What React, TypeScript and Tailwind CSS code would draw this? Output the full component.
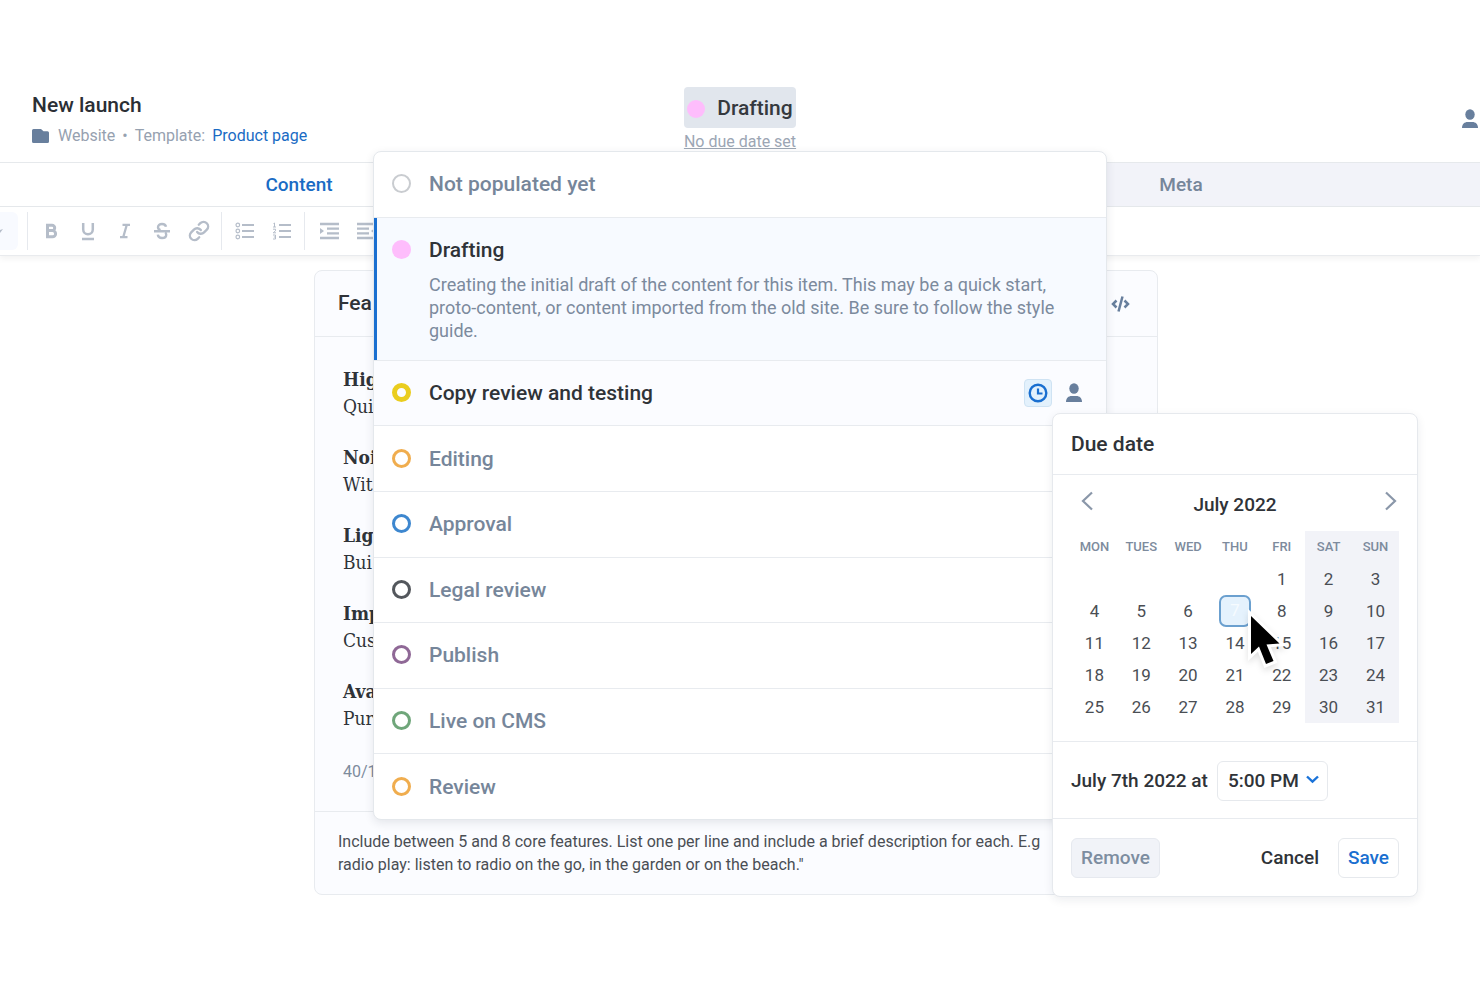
import clsx from 'clsx';

interface Status {
  name: string;
  ring: string;
  description?: string;
  current?: boolean;
  hovered?: boolean;
}

const statuses: Status[] = [
  { name: 'Not populated yet', ring: 'border-2 border-[#c9ccd0]' },
  {
    name: 'Drafting',
    ring: 'bg-[#febdfc]',
    current: true,
    description:
      'Creating the initial draft of the content for this item. This may be a quick start, proto-content, or content imported from the old site. Be sure to follow the style guide.',
  },
  { name: 'Copy review and testing', ring: 'border-[5px] border-[#eacd1f]', hovered: true },
  { name: 'Editing', ring: 'border-[3px] border-[#f0ad4e]' },
  { name: 'Approval', ring: 'border-[3px] border-[#3d87cf]' },
  { name: 'Legal review', ring: 'border-[3px] border-[#53575c]' },
  { name: 'Publish', ring: 'border-[3px] border-[#8f6896]' },
  { name: 'Live on CMS', ring: 'border-[3px] border-[#6fa67a]' },
  { name: 'Review', ring: 'border-[3px] border-[#f0ad4e]' },
];

const features = [
  { title: 'Hig', text: 'Qui' },
  { title: 'Noi', text: 'Wit' },
  { title: 'Lig', text: 'Bui' },
  { title: 'Imp', text: 'Cus' },
  { title: 'Ava', text: 'Pur' },
];

const weekdays = ['MON', 'TUES', 'WED', 'THU', 'FRI', 'SAT', 'SUN'];

const weeks: (number | null)[][] = [
  [null, null, null, null, 1, 2, 3],
  [4, 5, 6, 7, 8, 9, 10],
  [11, 12, 13, 14, 15, 16, 17],
  [18, 19, 20, 21, 22, 23, 24],
  [25, 26, 27, 28, 29, 30, 31],
];

function PersonIcon() {
  return (
    <svg width="16" height="20" viewBox="0 0 16 20" fill="#687f9d" aria-hidden="true">
      <ellipse cx="8" cy="5.5" rx="4.7" ry="5.3" />
      <path d="M0 19c0-4 2.6-6 5.500-6h5C13.400 13 16 15 16 19z" />
    </svg>
  );
}

function Cursor() {
  return (
    <svg
      className="pointer-events-none absolute left-[28px] top-[14px] z-10 drop-shadow-md"
      width="42"
      height="62"
      viewBox="0 0 42 62"
      aria-hidden="true"
    >
      <path
        d="M4 7v38l8-7.500L19 55l7.500-3L19.500 35.500 32.500 34.500z"
        fill="#000"
        stroke="#fff"
        strokeWidth="6"
        paintOrder="stroke"
      />
    </svg>
  );
}

function Divider() {
  return <span className="h-[38px] w-px bg-[#e6e9ee]" />;
}

function Toolbar() {
  const tool = 'flex h-8 w-[37px] items-center justify-center text-[#b5bdc9]';
  return (
    <div
      role="toolbar"
      aria-label="Formatting"
      className="relative flex h-[49px] items-center border-b border-[#e9ebee] bg-white shadow-[0_3px_6px_rgba(0,0,0,0.05)]"
    >
      <button aria-label="Text style" className="mr-[9px] flex h-[38px] w-[18px] items-center rounded-r-md bg-[#f8faff]">
        <svg width="3" height="4" viewBox="0 0 3 4">
          <path d="M0 4V1l3-1z" fill="#b5bdc9" />
        </svg>
      </button>
      <Divider />
      <div className="flex px-1">
        <button aria-label="Bold" className={tool}>
          <svg width="20" height="20" viewBox="0 0 20 20" fill="none" stroke="currentColor" strokeWidth="3">
            <path d="M6.500 4.200h4.500a2.700 2.700 0 0 1 0 5.400H6.500zM6.500 9.600h5a3.100 3.100 0 0 1 0 6.200H6.500z" />
          </svg>
        </button>
        <button aria-label="Underline" className={tool}>
          <svg width="20" height="20" viewBox="0 0 20 20" fill="none" stroke="currentColor" strokeWidth="2.500">
            <path d="M5.200 2v6.500a4.800 4.800 0 0 0 9.600 0V2M4 18h12" />
          </svg>
        </button>
        <button aria-label="Italic" className={tool}>
          <svg width="20" height="20" viewBox="0 0 20 20" fill="none" stroke="currentColor" strokeWidth="2.300">
            <path d="M7.500 3.800h7.500M5 16.200h7.500M11.800 3.800L8.200 16.200" />
          </svg>
        </button>
        <button aria-label="Strikethrough" className={tool}>
          <svg width="20" height="20" viewBox="0 0 20 20" fill="none" stroke="currentColor" strokeWidth="2.400">
            <path d="M14 5.800C13.700 3.800 12.200 3 10 3 7.500 3 6 4.200 6 6.200c0 1.400.8 2.400 2.500 3M5.800 13.600C6.100 15.900 7.700 17 10 17c2.600 0 4.200-1.200 4.200-3.300 0-.9-.3-1.600-.9-2.200M2 10.200h16" />
          </svg>
        </button>
        <button aria-label="Link" className={tool}>
          <svg width="22" height="22" viewBox="0 0 24 24" fill="none" stroke="currentColor" strokeWidth="2.600" strokeLinecap="round">
            <path d="M10 13a5 5 0 0 0 7.540.54l3-3a5 5 0 0 0-7.070-7.070l-1.720 1.710" />
            <path d="M14 11a5 5 0 0 0-7.540-.54l-3 3a5 5 0 0 0 7.070 7.070l1.710-1.710" />
          </svg>
        </button>
      </div>
      <Divider />
      <div className="flex px-1">
        <button aria-label="Bulleted list" className={tool}>
          <svg width="20" height="18" viewBox="0 0 20 18" fill="none" stroke="currentColor">
            <path d="M7 3h12M7 9h12M7 15h12" strokeWidth="2.200" />
            <circle cx="2.800" cy="3" r="1.800" strokeWidth="1.200" />
            <circle cx="2.800" cy="9" r="1.800" strokeWidth="1.200" />
            <circle cx="2.800" cy="15" r="1.800" strokeWidth="1.200" />
          </svg>
        </button>
        <button aria-label="Numbered list" className={tool}>
          <svg width="20" height="18" viewBox="0 0 20 18" fill="none" stroke="currentColor">
            <path d="M7 3h12M7 9h12M7 15h12" strokeWidth="2.200" />
            <path d="M1.500 1.500l1-.5v4M1 5h3M1 7.200h2.500v1.600L1.200 10.800H4M1 13h2.500v4H1M1.800 15h1.700" />
          </svg>
        </button>
      </div>
      <Divider />
      <div className="flex px-[5px]">
        <button aria-label="Indent" className={tool}>
          <svg width="20" height="18" viewBox="0 0 20 18" stroke="currentColor" strokeWidth="2.300">
            <path d="M1 2h19M8 6.700h12M8 11.300h12M1 16h19" />
            <path d="M1 6l4 3-4 3z" fill="currentColor" stroke="none" />
          </svg>
        </button>
        <button aria-label="Outdent" className={tool}>
          <svg width="20" height="18" viewBox="0 0 20 18" stroke="currentColor" strokeWidth="2.300">
            <path d="M1 2h19M1 6.700h12M1 11.300h12M1 16h19" />
            <path d="M19 6l-4 3 4 3z" fill="currentColor" stroke="none" />
          </svg>
        </button>
      </div>
    </div>
  );
}

function Calendar() {
  return (
    <div className="border-b border-[#e8ebef] px-[18px] pb-[18px] pt-1">
      <div className="grid h-[52px] grid-cols-[32px_1fr_32px] items-center">
        <button aria-label="Previous month" className="justify-self-center pb-2">
          <svg width="16" height="20" viewBox="0 0 16 20" fill="none" stroke="#8a97a9" strokeWidth="2.200">
            <path d="M13 1.500L4 10l9 8.500" />
          </svg>
        </button>
        <span className="text-center text-[19px] font-medium">July 2022</span>
        <button aria-label="Next month" className="justify-self-end pb-2">
          <svg width="16" height="20" viewBox="0 0 16 20" fill="none" stroke="#8a97a9" strokeWidth="2.200">
            <path d="M3 1.500l9 8.500-9 8.500" />
          </svg>
        </button>
      </div>
      <table className="w-full table-fixed text-center">
        <thead>
          <tr>
            {weekdays.map((day, i) => (
              <th
                key={day}
                scope="col"
                className={clsx('h-8 p-0 text-[13px] font-medium text-[#7d8b9d]', i > 4 && 'bg-[#f2f3f8]')}
              >
                {day}
              </th>
            ))}
          </tr>
        </thead>
        <tbody>
          {weeks.map((week, w) => (
            <tr key={w}>
              {week.map((day, i) => (
                <td key={i} className={clsx('h-8 p-0 text-[17px] text-[#4a4e54]', i > 4 && 'bg-[#f2f3f8]')}>
                  {day === 7 ? (
                    <div className="relative mx-auto h-8 w-8">
                      <button
                        aria-pressed="true"
                        className="h-8 w-8 rounded-[7px] border-2 border-[#6ba0cf] bg-[#e5f2fd] text-[#f6fbff]"
                      >
                        7
                      </button>
                      <Cursor />
                    </div>
                  ) : (
                    day && <button className="h-8 w-8 pt-px">{day}</button>
                  )}
                </td>
              ))}
            </tr>
          ))}
        </tbody>
      </table>
    </div>
  );
}

function DueDatePopover() {
  return (
    <div
      role="dialog"
      aria-label="Due date"
      className="absolute left-full top-full mt-[6px] w-[366px] rounded-lg border border-[#e6e9ed] bg-white text-[#2f3338] shadow-[0_3px_10px_rgba(30,40,60,0.08)]"
    >
      <h2 className="flex h-[61px] items-center border-b border-[#e8ebef] px-[18px] pt-0.5 text-[21px] font-medium">
        Due date
      </h2>
      <Calendar />
      <div className="flex h-[77px] items-center gap-[9px] border-b border-[#e8ebef] px-[18px] pt-0.5 text-[19px] font-medium">
        <label htmlFor="due-time">July 7th 2022 at</label>
        <div className="relative">
          <select
            id="due-time"
            defaultValue="5:00 PM"
            className="h-10 w-[111px] appearance-none rounded-md border border-[#e6e9ed] bg-white pl-[10px]"
          >
            <option>5:00 PM</option>
          </select>
          <svg
            className="pointer-events-none absolute right-[9px] top-[14px]"
            width="13"
            height="9"
            viewBox="0 0 13 9"
            fill="none"
            stroke="#1a73d9"
            strokeWidth="2.400"
          >
            <path d="M1 1.500l5.500 5.200L12 1.500" />
          </svg>
        </div>
      </div>
      <div className="flex h-[77px] items-center px-[18px] pt-px text-[19px] font-medium">
        <button className="h-10 w-[89px] rounded-md border border-[#e6e9ef] bg-[#f1f3f8] text-[#7d8da0]">Remove</button>
        <button className="ml-auto mr-[19px]">Cancel</button>
        <button className="h-10 w-[61px] rounded-md border border-[#e6e9ed] bg-white text-[#1a6fd0]">Save</button>
      </div>
    </div>
  );
}

function StatusMenu() {
  return (
    <ul className="absolute left-1/2 top-16 flex h-[669px] w-[734px] -translate-x-1/2 flex-col rounded-lg border border-[#e4e8ec] bg-white shadow-[0_3px_10px_rgba(30,40,60,0.1)]">
      {statuses.map((status) => (
        <li
          key={status.name}
          className={clsx(
            'relative flex border-b border-[#e8ebef] last:border-b-0',
            status.current ? 'h-[143px] items-start bg-[#f7faff] pt-[17px]' : 'flex-1 items-center',
            status.hovered && 'z-10 bg-[#fbfcff]',
          )}
        >
          {status.current && <span className="absolute inset-y-0 left-0 w-[3px] bg-[#1a6fd0]" />}
          <button className="flex flex-1 items-start gap-[18px] pl-[18px] text-left">
            <span className={clsx('mt-[5px] h-[19px] w-[19px] shrink-0 rounded-full', status.ring)} />
            <span>
              <span
                className={clsx(
                  'block text-[21px] font-medium leading-[30px]',
                  status.current || status.hovered ? 'text-[#2f3338]' : 'text-[#76869a]',
                )}
              >
                {status.name}
              </span>
              {status.description && (
                <span className="mt-2 block w-[654px] text-[18px] leading-[23px] text-[#7c8a9d]">{status.description}</span>
              )}
            </span>
          </button>
          {status.hovered && (
            <div className="flex items-center gap-[14px] pr-6">
              <div className="relative">
                <button
                  aria-label="Due date"
                  className="flex h-7 w-7 items-center justify-center rounded border border-[#cfe3f3] bg-[#e3f1fc]"
                >
                  <svg width="20" height="20" viewBox="0 0 20 20" fill="none" stroke="#1a6fd0">
                    <circle cx="10" cy="10" r="8.300" strokeWidth="2.400" />
                    <path d="M10 5.500V10.500h4.500" strokeWidth="2.200" />
                  </svg>
                </button>
                <DueDatePopover />
              </div>
              <button aria-label="Assignees">
                <PersonIcon />
              </button>
            </div>
          )}
        </li>
      ))}
    </ul>
  );
}

function Header() {
  return (
    <header className="relative z-20 grid h-[83px] grid-cols-[1fr_auto_1fr] items-start border-b border-[#e6e9ec]">
      <div className="pl-8 pt-3">
        <h1 className="text-[21px] font-medium leading-[26px] text-[#2b2f35]">New launch</h1>
        <div className="mt-[6px] flex items-center gap-[7px] text-[16px] leading-6 text-[#96a1b0]">
          <svg className="mr-[2px]" width="17" height="14" viewBox="0 0 17 14" fill="#687f9d" aria-hidden="true">
            <path d="M0 1.500Q0 0 1.500 0H9l2.500 2.200H15.500Q17 2.200 17 3.700V12.500Q17 14 15.500 14H1.500Q0 14 0 12.500z" />
          </svg>
          <span>Website</span>
          <span>•</span>
          <span>Template:</span>
          <a href="#template" className="text-[#1a6bc4]">
            Product page
          </a>
        </div>
      </div>
      <div className="relative flex flex-col items-center pt-[7px]">
        <button className="flex h-[41px] items-center gap-3 rounded bg-[#e1e6ed] px-[3px] pt-0.5 text-[21px] font-medium text-[#35393e]">
          <span className="h-[18px] w-[18px] rounded-full bg-[#febdfc]" />
          Drafting
        </button>
        <button className="text-[16px] leading-[28px] text-[#9ca6b4] underline">No due date set</button>
        <div className="absolute left-1/2 top-[7px]">
          <StatusMenu />
        </div>
      </div>
      <button aria-label="People" className="mr-[2px] mt-[29px] justify-self-end">
        <PersonIcon />
      </button>
    </header>
  );
}

function EditorCard() {
  return (
    <section className="mx-auto max-w-[844px] rounded-lg border border-[#e8ebef] bg-[#fbfcff] text-[#2f3338]">
      <div className="flex h-[66px] items-center justify-between border-b border-[#e8ebef] pl-[23px] pr-[27px]">
        <h2 className="text-[21px] font-medium">Fea</h2>
        <button aria-label="View source">
          <svg width="20" height="18" viewBox="0 0 20 18" fill="none" stroke="#687f9d" strokeWidth="2.500">
            <path d="M6.500 5.500L3 9l3.500 3.500M14.500 5.500L18 9l-3.500 3.500M12.500 1.500L8.500 16.500" />
          </svg>
        </button>
      </div>
      <div className="flex h-[475px] flex-col gap-6 border-b border-[#e8ebef] px-[28px] pt-[29px] font-['DejaVu_Serif_Condensed','DejaVu_Serif',serif] text-[19px] leading-[27px]">
        {features.map((feature) => (
          <p key={feature.title}>
            <strong className="block">{feature.title}</strong>
            {feature.text}
          </p>
        ))}
        <span className="pt-[2px] font-[Roboto,sans-serif] text-[16px] text-[#7d8b9d]">40/1</span>
      </div>
      <p className="px-[23px] py-[18px] text-[16px] leading-[23px] text-[#4a4e54]">
        Include between 5 and 8 core features. List one per line and include a brief description for each. E.g
        <br />
        radio play: listen to radio on the go, in the garden or on the beach."
      </p>
    </section>
  );
}

export default function App() {
  return (
    <div className="min-h-screen overflow-hidden bg-white pt-20 font-[Roboto,'Noto_Sans',sans-serif]">
      <Header />
      <nav className="-mx-[142px] grid h-[44px] grid-cols-2 border-b border-[#e6e9ec] text-center text-[19px] leading-[43px] font-medium">
        <a href="#content" className="text-[#1a6bc4]">
          Content
        </a>
        <a href="#meta" className="bg-[#f2f3f9] text-[#76869a]">
          Meta
        </a>
      </nav>
      <Toolbar />
      <main className="pb-20 pr-2 pt-[14px]">
        <EditorCard />
      </main>
    </div>
  );
}
